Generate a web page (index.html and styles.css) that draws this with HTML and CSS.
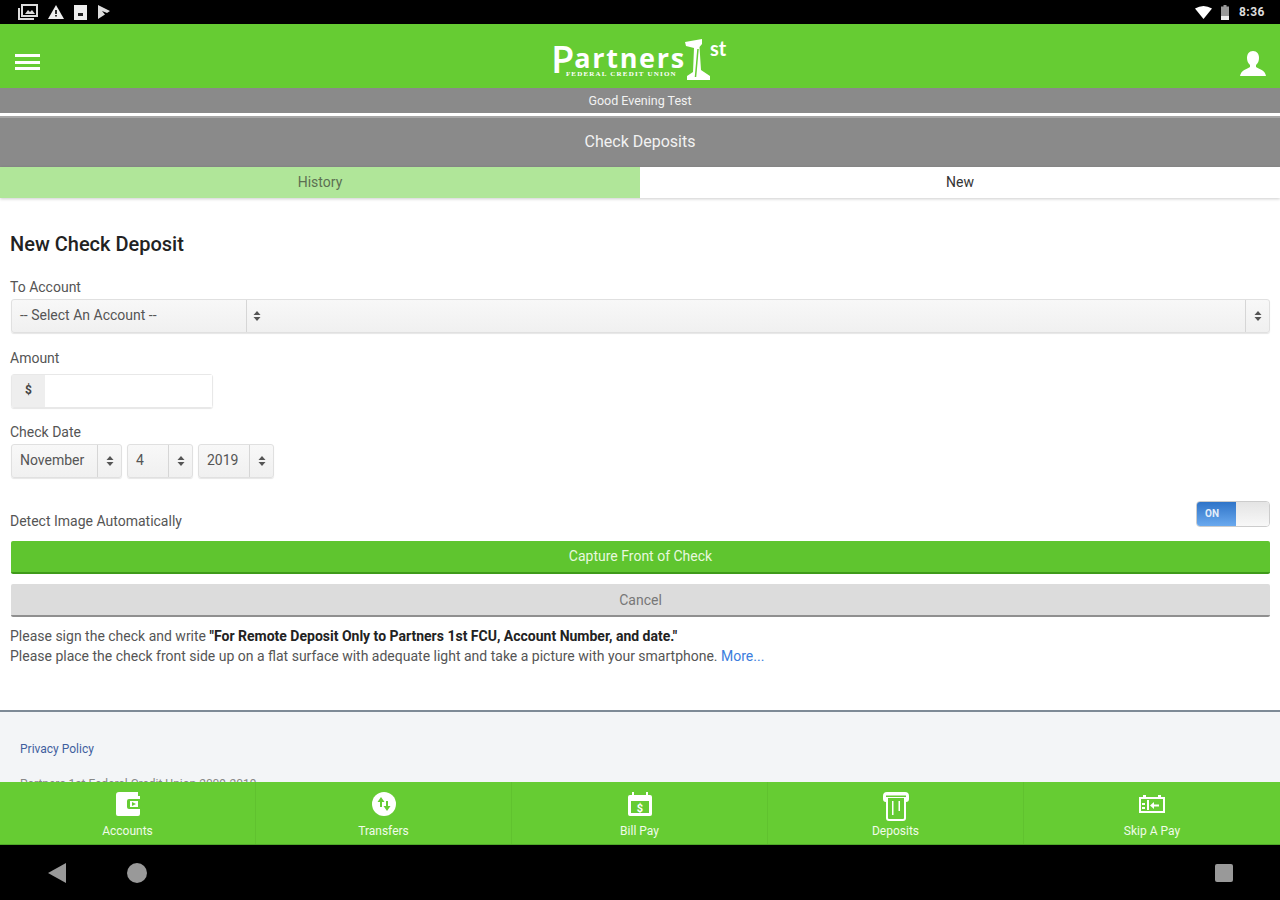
FILE: index.html
```html
<!DOCTYPE html>
<html lang="en">
<head>
  <meta charset="UTF-8" />
  <title>Check Deposits</title>
  <link rel="stylesheet" href="styles.css">
</head>
<body>

  <svg class="defs" width="0" height="0">
    <symbol id="updown" viewBox="0 0 8 10">
      <path d="M4 0L7.5 4H.5zM4 10L.5 6h7z" fill="#555"/>
    </symbol>
  </svg>

  <div class="status-bar">
    <div class="status-left">
      <svg width="20" height="16" viewBox="0 0 20 16"><path d="M4 1h15v11H4z" fill="none" stroke="#ddd" stroke-width="2"/><path d="M1 4v11h15" fill="none" stroke="#ddd" stroke-width="2"/><path d="M7 10l3-4 2 2 2-2 3 4z" fill="#ddd"/></svg>
      <svg width="16" height="14" viewBox="0 0 16 14"><path d="M8 0l8 14H0z" fill="#eee"/><path d="M7.2 5h1.600v4H7.200zM7.200 10h1.600v1.600H7.200z" fill="#000"/></svg>
      <svg width="13" height="15" viewBox="0 0 13 15"><path d="M0 0h13v15H0z" fill="#eee"/><path d="M4 8h5v3H4z" fill="#222"/></svg>
      <svg width="14" height="14" viewBox="0 0 14 14"><path d="M1 0l12 6-3 2-5-2 3 3.500L1 14z" fill="#ddd"/></svg>
    </div>
    <div class="status-right">
      <svg width="17" height="13" viewBox="0 0 17 13"><path d="M0 2.500Q8.500-2.500 17 2.500L8.500 13z" fill="#fff"/></svg>
      <svg width="8" height="15" viewBox="0 0 8 15"><path d="M2.500 0h3v1.500H8V15H0V1.500h2.500z" fill="#999"/><path d="M0 11h8v4H0z" fill="#eee"/></svg>
      <span class="clock">8:36</span>
    </div>
  </div>

  <header class="app-header">
    <div class="menu-icon"><span></span><span></span><span></span></div>
    <div class="logo">
      <div class="logo-text">
        <div class="logo-name"><span class="logo-cap">P</span>artners</div>
        <div class="logo-sub">Federal Credit Union</div>
      </div>
      <svg class="logo-pillar" width="26" height="42" viewBox="0 0 26 42">
        <path d="M0 3L17 0V5L14.500 8 16 31 25 37V41H2V37L8 33 9 9 1 7z" fill="#fff"/>
        <path d="M13 10L10.500 38" stroke="#66cc33" stroke-width="1.500"/>
      </svg>
      <div class="logo-st">st</div>
    </div>
    <svg class="user-icon" width="26" height="25" viewBox="0 0 26 25">
      <path d="M13 0c4 0 6 3 6 7 0 3-1 5-3 7v2c3 2 9 3 10 9H0c1-6 7-7 10-9v-2c-2-2-3-4-3-7 0-4 2-7 6-7z" fill="#fff"/>
    </svg>
  </header>

  <div class="greeting">Good Evening Test</div>
  <div class="page-title">Check Deposits</div>

  <div class="tabs">
    <div class="tab tab-inactive">History</div>
    <div class="tab tab-active">New</div>
  </div>

  <main class="content">
    <div class="form">
      <h2>New Check Deposit</h2>

      <label class="label-account">To Account</label>
      <div class="select select-account">
        <div class="select-value select-first">-- Select An Account --</div>
        <div class="select-rest">
          <svg width="8" height="10"><use href="#updown"/></svg>
        </div>
        <div class="select-arrow"><svg width="8" height="10"><use href="#updown"/></svg></div>
      </div>

      <label class="label-amount">Amount</label>
      <div class="amount-group">
        <div class="amount-addon">$</div>
        <div class="amount-input"></div>
      </div>

      <label class="label-date">Check Date</label>
      <div class="date-row">
        <div class="select select-month">
          <div class="select-value">November</div>
          <div class="select-arrow"><svg width="8" height="10"><use href="#updown"/></svg></div>
        </div>
        <div class="select select-day">
          <div class="select-value">4</div>
          <div class="select-arrow"><svg width="8" height="10"><use href="#updown"/></svg></div>
        </div>
        <div class="select select-year">
          <div class="select-value">2019</div>
          <div class="select-arrow"><svg width="8" height="10"><use href="#updown"/></svg></div>
        </div>
      </div>

      <div class="detect-row">
        <span>Detect Image Automatically</span>
        <div class="toggle">
          <div class="toggle-on">ON</div>
          <div class="toggle-off"></div>
        </div>
      </div>

      <button class="btn btn-capture">Capture Front of Check</button>
      <button class="btn btn-cancel">Cancel</button>

      <p class="note">Please sign the check and write <b>"For Remote Deposit Only to Partners 1st FCU, Account Number, and date."</b></p>
      <p class="note">Please place the check front side up on a flat surface with adequate light and take a picture with your smartphone. <a href="#">More...</a></p>
    </div>

    <footer class="site-footer">
      <a href="#">Privacy Policy</a>
      <p>Partners 1st Federal Credit Union 2009-2019</p>
    </footer>
  </main>

  <nav class="bottom-nav">
    <div class="nav-item">
      <svg width="24" height="24" viewBox="0 0 24 24"><path d="M3 0h19v4h2v18a2 2 0 0 1-2 2H2a2 2 0 0 1-2-2V3a3 3 0 0 1 3-3z" fill="#fff"/><path d="M13 7h11v10H13a2 2 0 0 1-2-2V9a2 2 0 0 1 2-2z" fill="#66cc33"/><path d="M14 9h8v6h-8z" fill="#fff"/><path d="M16 10l4 2-4 2z" fill="#66cc33"/></svg>
      <span>Accounts</span>
    </div>
    <div class="nav-item">
      <svg width="24" height="24" viewBox="0 0 24 24"><circle cx="12" cy="12" r="12" fill="#fff"/><path d="M9 5L5.500 10H8v5h2v-5h2.500zM15 19l3.500-5H16V9h-2v5h-2.500z" fill="#66cc33"/></svg>
      <span>Transfers</span>
    </div>
    <div class="nav-item">
      <svg width="24" height="24" viewBox="0 0 24 24"><path d="M6 0v3h12V0h2v3h2a2 2 0 0 1 2 2v17a2 2 0 0 1-2 2H2a2 2 0 0 1-2-2V5a2 2 0 0 1 2-2h2V0z" fill="#fff"/><path d="M3 9h18v12H3z" fill="#66cc33"/><text x="12" y="19.500" class="bill-sign">$</text></svg>
      <span>Bill Pay</span>
    </div>
    <div class="nav-item">
      <svg class="deposit-icon" width="26" height="29" viewBox="0 0 26 29"><path d="M4 0h18a4 4 0 0 1 4 4v3a3 3 0 0 1-3 3v16a3 3 0 0 1-3 3H6a3 3 0 0 1-3-3V10a3 3 0 0 1-3-3V4a4 4 0 0 1 4-4z" fill="#fff"/><path d="M5 6h16v20a1 1 0 0 1-1 1H6a1 1 0 0 1-1-1z" fill="#66cc33"/><path d="M3 3.500h20v1.500H3z" fill="#66cc33"/><path d="M9 9h1.500v14H9zM15.500 9H17v10h-1.500z" fill="#fff"/></svg>
      <span>Deposits</span>
    </div>
    <div class="nav-item">
      <svg class="skip-icon" width="26" height="18" viewBox="0 0 26 18"><path d="M1 3h24v14H1z" fill="none" stroke="#fff" stroke-width="2"/><path d="M4 0h3v4H4zM19 0h3v4h-3zM8 5h2v10H8z" fill="#fff"/><path d="M3 8h3v2H3zM3 12h3v2H3zM12 9.500h8v2h-8zM15 7v7l-4-3.500z" fill="#fff"/></svg>
      <span>Skip A Pay</span>
    </div>
  </nav>

  <div class="android-nav">
    <svg width="18" height="20" viewBox="0 0 18 20"><path d="M18 0v20L0 10z" fill="#999"/></svg>
    <div class="home-dot"></div>
    <div class="recent-box"></div>
  </div>

</body>
</html>
```

FILE: styles.css
```css
* {
  box-sizing: border-box;
}

html, body {
  margin: 0;
  height: 900px;
  overflow: hidden;
}

body {
  font-family: Roboto, "Liberation Sans", sans-serif;
  font-size: 14px;
  color: #444;
  background: #fff;
  display: flex;
  flex-direction: column;
}

.defs {
  position: absolute;
}

/* top system bar */
.status-bar {
  height: 24px;
  flex: none;
  background: #000;
  display: flex;
  justify-content: space-between;
  align-items: center;
  padding: 0 15px 0 18px;
}

.status-left {
  display: flex;
  align-items: center;
  gap: 10px;
}

.status-right {
  display: flex;
  align-items: center;
  gap: 9px;
}

.clock {
  color: #ddd;
  font-size: 12px;
  font-weight: 700;
  letter-spacing: 0.5px;
  margin-left: 1px;
}

/* green header */
.app-header {
  height: 64px;
  flex: none;
  background: #66cc33;
  display: flex;
  align-items: center;
  justify-content: space-between;
  padding: 10px 14px 0 15px;
}

.menu-icon {
  width: 25px;
  display: flex;
  flex-direction: column;
  gap: 3.5px;
  margin-top: 2px;
}

.menu-icon span {
  height: 3px;
  background: #fff;
}

.user-icon {
  margin-top: 4px;
}

.logo {
  display: flex;
  align-items: flex-start;
  color: #fff;
  margin: -2px 0 0 -3px;
}

.logo-text {
  width: 134px;
}

.logo-name {
  font-family: "Open Sans", sans-serif;
  font-size: 27px;
  font-weight: 700;
  line-height: 38px;
  height: 32px;
  letter-spacing: 1.7px;
  white-space: nowrap;
}

.logo-cap {
  font-size: 38px;
  font-weight: 600;
  line-height: 0;
  letter-spacing: 0;
  vertical-align: -5px;
}

.logo-sub {
  font-family: "Liberation Serif", serif;
  font-size: 7px;
  line-height: 7px;
  letter-spacing: 1.2px;
  font-weight: 700;
  text-transform: uppercase;
  white-space: nowrap;
  margin: 0 0 0 15px;
}

.logo-st {
  font-family: Lato, sans-serif;
  font-size: 20px;
  font-weight: 700;
  line-height: 18px;
  margin-left: -1px;
}

.greeting {
  height: 25px;
  flex: none;
  background: #8a8a8a;
  color: #f2f2f2;
  font-size: 12.500px;
  text-align: center;
  line-height: 26px;
}

.page-title {
  height: 54px;
  flex: none;
  background: #8a8a8a;
  border-top: 3px solid #fff;
  box-shadow: inset 0 2px 0 #a6a6a6;
  color: #f2f2f2;
  font-size: 16px;
  text-align: center;
  line-height: 52px;
}

.tabs {
  display: flex;
  height: 31px;
  flex: none;
  box-shadow: 0 1px 3px rgba(0, 0, 0, 0.2);
}

.tab {
  flex: 1;
  text-align: center;
  line-height: 30px;
  font-size: 14px;
}

.tab-inactive {
  background: #b0e699;
  color: #5c6f52;
}

.tab-active {
  background: #fff;
  color: #333;
}

/* form */
.content {
  flex: 1;
  min-height: 0;
  overflow: hidden;
}

.form {
  height: 512px;
  padding: 34px 10px 0 10px;
}

h2 {
  margin: 0;
  font-size: 20px;
  line-height: 24px;
  font-weight: 500;
  color: #222;
}

label {
  display: block;
  font-size: 14px;
  line-height: 16px;
  color: #555;
}

.label-account {
  margin-top: 23px;
}

.label-amount {
  margin-top: 17px;
}

.label-date {
  margin-top: 16px;
}

.select {
  display: flex;
  height: 34px;
  margin-left: 1px;
  background: linear-gradient(#f8f8f8, #f0f0f0);
  border: 1px solid #e0e0e0;
  border-radius: 3px;
  box-shadow: 0 1px 1px rgba(0, 0, 0, 0.1);
  color: #555;
  font-size: 14px;
  line-height: 31px;
}

.select-account {
  margin-top: 4px;
}

.select-value {
  flex: 1;
  padding-left: 8px;
  border-right: 1px solid #d6d6d6;
}

.select-first {
  flex: none;
  width: 235px;
}

.select-rest {
  flex: 1;
  display: flex;
  align-items: center;
  padding-left: 6px;
  border-right: 1px solid #d6d6d6;
}

.select-arrow {
  width: 23px;
  flex: none;
  display: flex;
  align-items: center;
  justify-content: center;
}

.amount-group {
  display: flex;
  width: 202px;
  height: 34px;
  margin: 8px 0 0 1px;
  border: 1px solid #e8e8e8;
  border-radius: 3px;
  box-shadow: 0 1px 1px rgba(0, 0, 0, 0.1);
}

.amount-addon {
  width: 33px;
  background: #eee;
  color: #444;
  font-size: 12px;
  font-weight: 700;
  text-align: center;
  line-height: 30px;
}

.amount-input {
  flex: 1;
  background: #fff;
}

.date-row {
  display: flex;
  gap: 5px;
  margin: 4px 0 0 1px;
}

.date-row .select {
  margin-left: 0;
}

.select-month {
  width: 111px;
}

.select-day {
  width: 66px;
}

.select-year {
  width: 76px;
}

.detect-row {
  display: flex;
  justify-content: space-between;
  align-items: flex-end;
  margin-top: 23px;
  font-size: 14px;
  color: #555;
}

.detect-row span {
  line-height: 16px;
  margin-bottom: -2px;
}

.toggle {
  display: flex;
  width: 74px;
  height: 26px;
  border: 1px solid #ccc;
  border-radius: 4px;
  overflow: hidden;
}

.toggle-on {
  width: 39px;
  background: linear-gradient(#2f74c8, #6aa9ee);
  color: #e4eefa;
  font-size: 10px;
  font-weight: 700;
  line-height: 24px;
  padding-left: 8px;
}

.toggle-off {
  flex: 1;
  background: linear-gradient(#e4e4e4, #f8f8f8);
}

.btn {
  display: block;
  width: calc(100% - 1px);
  margin-left: 1px;
  height: 33px;
  border: none;
  border-radius: 2px;
  font-family: inherit;
  font-size: 14px;
}

.btn-capture {
  margin-top: 14px;
  padding: 0 0 2px;
  background: #5fc52f;
  border-bottom: 2px solid #3f9a1a;
  color: #e8f8df;
}

.btn-cancel {
  margin-top: 10px;
  padding: 0;
  background: #dcdcdc;
  border-bottom: 2px solid #8f8f8f;
  color: #777;
}

.note {
  margin: 0;
  font-size: 14px;
  line-height: 20px;
  color: #555;
}

.btn-cancel + .note {
  margin-top: 9px;
}

.note b {
  color: #222;
  font-weight: 700;
}

.note a {
  color: #3b7ddd;
  text-decoration: none;
}

.site-footer {
  height: 120px;
  padding: 30px 20px 0;
  background: #f3f5f7;
  border-top: 2px solid #7d8a96;
  font-size: 12px;
  color: #888;
}

.site-footer a {
  display: block;
  line-height: 14px;
  color: #3f5f9e;
  text-decoration: none;
}

.site-footer p {
  margin: 21px 0 0;
  line-height: 14px;
}

/* bottom tabs */
.bottom-nav {
  height: 63px;
  flex: none;
  display: grid;
  grid-template-columns: repeat(5, 1fr);
  background: #66cc33;
  border-bottom: 1px solid #4fa828;
}

.nav-item {
  display: flex;
  flex-direction: column;
  align-items: center;
  justify-content: flex-end;
  gap: 8px;
  padding-bottom: 6px;
  color: #f0fbe9;
  font-size: 12px;
  line-height: 14px;
  border-right: 1px solid #60c22f;
}

.nav-item:last-child {
  border-right: none;
}

.bill-sign {
  font-family: Roboto, sans-serif;
  font-size: 11px;
  font-weight: 700;
  text-anchor: middle;
  fill: #fff;
}

.deposit-icon {
  margin-bottom: -5px;
}

.skip-icon {
  margin-bottom: 3px;
}

.android-nav {
  height: 55px;
  flex: none;
  background: #000;
  display: flex;
  align-items: center;
  padding: 0 47px 0 48px;
}

.home-dot {
  width: 20px;
  height: 20px;
  border-radius: 50%;
  background: #999;
  margin-left: 61px;
}

.recent-box {
  width: 18px;
  height: 18px;
  border-radius: 2px;
  background: #999;
  margin-left: auto;
}
```
